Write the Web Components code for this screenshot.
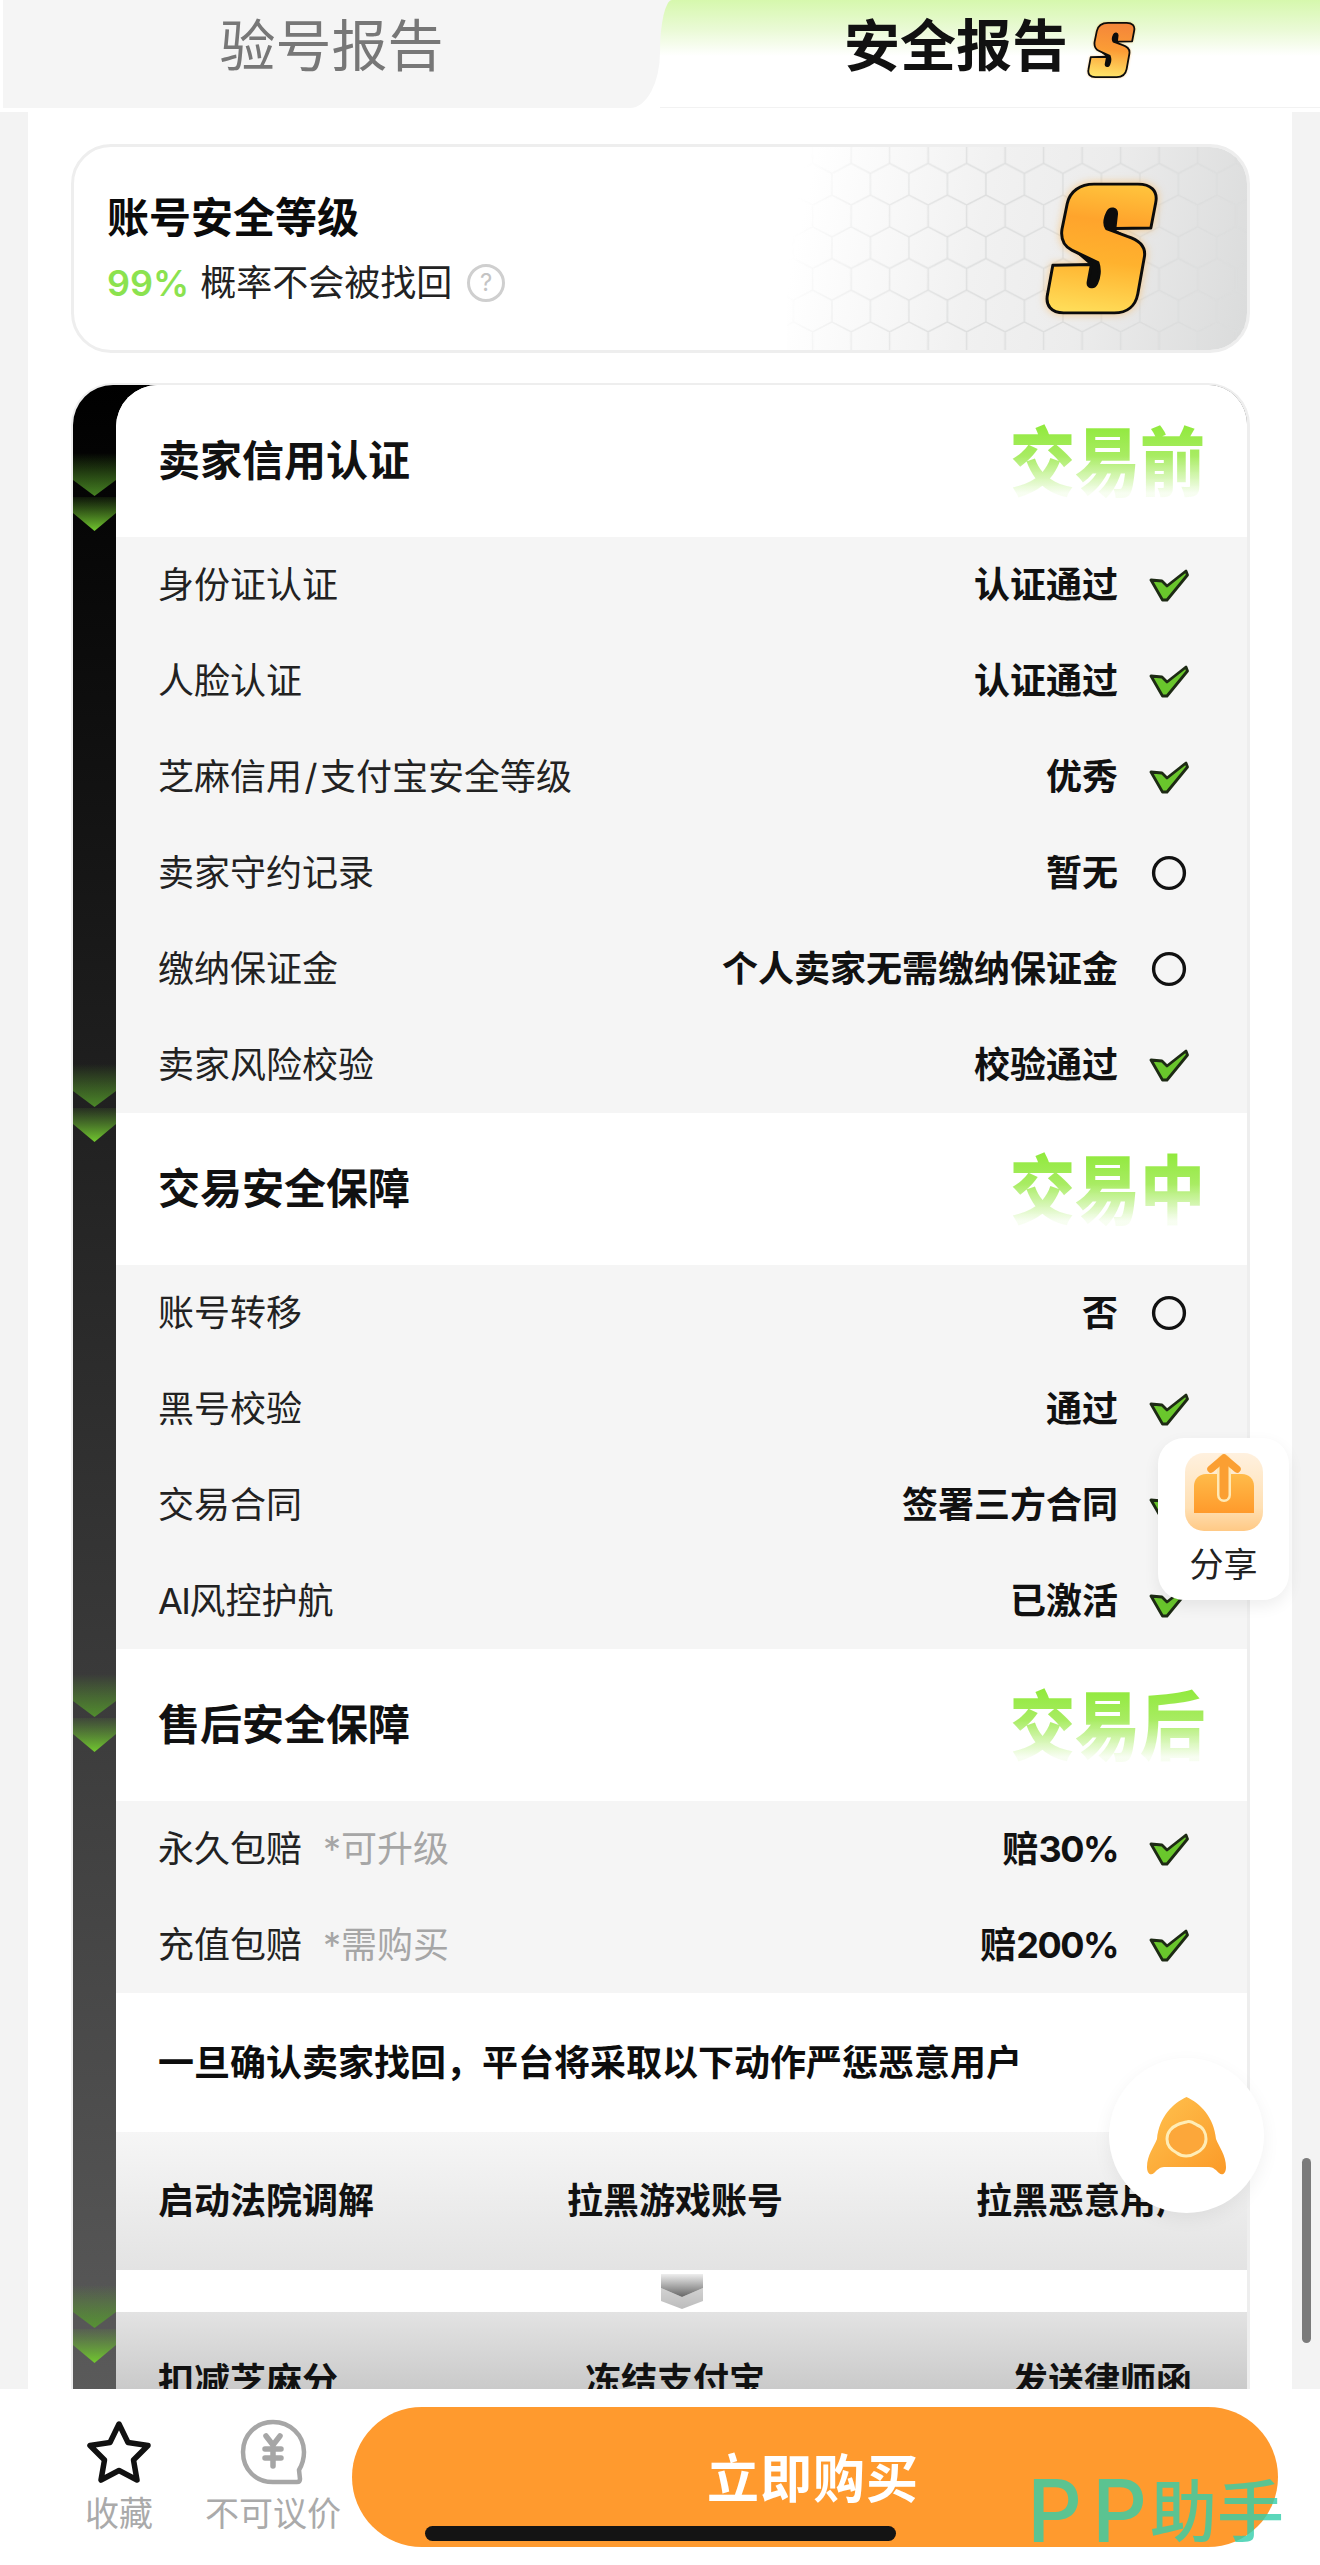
<!DOCTYPE html>
<html lang="zh-CN">
<head>
<meta charset="utf-8">
<title>安全报告</title>
<style>
html,body{margin:0;padding:0;background:#f3f3f3}
body{font-family:Inter,"Noto Sans CJK SC",sans-serif;color:#111}
</style>
</head>
<body>
<report-page>
  <report-tabs></report-tabs>
  <report-scroll>
    <level-card></level-card>
    <report-card>
      <report-head title="卖家信用认证" stage="交易前" first></report-head>
      <report-row label="身份证认证" value="认证通过" status="ok"></report-row>
      <report-row label="人脸认证" value="认证通过" status="ok"></report-row>
      <report-row label="芝麻信用/支付宝安全等级" value="优秀" status="ok"></report-row>
      <report-row label="卖家守约记录" value="暂无" status="none"></report-row>
      <report-row label="缴纳保证金" value="个人卖家无需缴纳保证金" status="none"></report-row>
      <report-row label="卖家风险校验" value="校验通过" status="ok"></report-row>
      <report-head title="交易安全保障" stage="交易中"></report-head>
      <report-row label="账号转移" value="否" status="none"></report-row>
      <report-row label="黑号校验" value="通过" status="ok"></report-row>
      <report-row label="交易合同" value="签署三方合同" status="ok"></report-row>
      <report-row label="AI风控护航" value="已激活" status="ok"></report-row>
      <report-head title="售后安全保障" stage="交易后"></report-head>
      <report-row label="永久包赔" note="*可升级" value="赔30%" status="ok"></report-row>
      <report-row label="充值包赔" note="*需购买" value="赔200%" status="ok"></report-row>
      <penalty-block></penalty-block>
    </report-card>
  </report-scroll>
  <bottom-bar></bottom-bar>
  <share-float></share-float>
  <rocket-float></rocket-float>
  <scroll-thumb></scroll-thumb>
</report-page>
<script>
function def(name, css, html){
  customElements.define(name, class extends HTMLElement{
    connectedCallback(){
      if(this.shadowRoot) return;
      const s=this.attachShadow({mode:'open'});
      const a=n=>this.getAttribute(n)||'';
      const small=this.hasAttribute('small');
      s.innerHTML='<style>'+css+'</style>'+(typeof html==='function'?html(a,small):html);
    }
  });
}
let gid=0;
const latin=t=>t.replace(/\//g,'<span style="padding:0 2.5px">/</span>').replace(/[A-Za-z0-9%]+(?![^<]*>)/g,m=>`<span style="letter-spacing:-1.5px">${m}</span>`);
const S_PATH='M338 184 L472 184 C512 184 534 204 527 240 L512 318 L402 320 L407 276 C408 258 388 254 380 270 C372 286 366 304 376 320 L440 344 C478 356 498 376 492 408 L472 520 C465 556 440 578 400 578 L245 578 C208 578 188 556 196 520 L212 432 L330 430 L320 484 C318 500 338 504 346 488 C354 472 358 446 350 424 L270 386 C246 374 236 350 240 322 L256 244 C264 206 296 184 338 184 Z';
const S_SLITS='M404 324 L409 272 C409 252 386 250 376 268 C364 292 362 312 374 324 L448 350 Z M322 428 L316 486 C314 506 340 510 350 492 C362 468 364 442 352 420 L280 392 Z';

def('s-logo',':host{display:block;line-height:0}svg{display:block;overflow:visible}',(a,small)=>{
  const id='sg'+(++gid);
  const w=a('w'),h=a('h');
  const stops=small
    ?'<stop offset="0" stop-color="#f4853a"/><stop offset=".5" stop-color="#fb9c35"/><stop offset="1" stop-color="#ffe468"/>'
    :'<stop offset="0" stop-color="#ffc23c"/><stop offset=".28" stop-color="#ffa42c"/><stop offset=".6" stop-color="#ffb22e"/><stop offset="1" stop-color="#ffdc58"/>';
  const sw=small?13:9;
  return `<svg width="${w}" height="${h}" viewBox="185 172 355 418" style="filter:drop-shadow(0 0 ${small?1:4}px rgba(255,170,50,.55))"><defs><linearGradient id="${id}" x1=".55" y1="0" x2=".45" y2="1">${stops}</linearGradient></defs><path d="${S_SLITS}" fill="#0c0c0c"/><path d="${S_PATH}" fill="url(#${id})" stroke="#0c0c0c" stroke-width="${sw}" stroke-linejoin="round"/></svg>`;
});

def('report-page',`:host{display:flex;flex-direction:column;width:1320px;height:2565px;overflow:hidden;position:relative;background:#f3f3f3}`,`<slot></slot>`);

def('report-tabs',`
:host{display:flex;flex:none;height:112px;align-items:flex-start;padding-left:3px;background:linear-gradient(#f5f5f5,#f5f5f5) 660px 0/14px 52px no-repeat,#fff}
.t{height:108px;display:flex;align-items:center;justify-content:center;box-sizing:border-box;padding-bottom:16px;font-size:56px;line-height:1}
.a{width:657px;background:#f5f5f5;color:#777;border-bottom-right-radius:30px 56px}
.b{flex:1;background:linear-gradient(#d6f8ad 0,#eafad6 30px,#fff 56px);border-top-left-radius:12px 52px;border-bottom:1px solid #f2f2f2;font-weight:700;color:#111;gap:19px}
s-logo{margin-top:8px}
`,`<div class="t a">验号报告</div><div class="t b"><span>安全报告</span><s-logo w="49" h="58" small></s-logo></div>`);

def('report-scroll',`:host{display:block;flex:1;min-height:0;overflow:hidden;margin:0 28px;background:#fff;padding:32px 42px 0 43px;box-sizing:border-box}`,`<slot></slot>`);

def('level-card',`
:host{display:flex;align-items:center;height:209px;box-sizing:border-box;border:3px solid #eee;border-radius:40px;background:#fff;position:relative;overflow:hidden;margin-bottom:30px;padding-left:33px}
.decor{position:absolute;right:0;top:0;bottom:0;width:460px;background:linear-gradient(102deg,rgba(255,255,255,0) 6%,#f1f1f1 42%,#ececec 65%,#dadbdb 100%)}
.decor svg{position:absolute;inset:0;width:100%;height:100%;-webkit-mask-image:linear-gradient(100deg,transparent 4%,#000 40%);mask-image:linear-gradient(100deg,transparent 4%,#000 40%)}
.txt{position:relative;flex:1;display:flex;flex-direction:column;padding-bottom:1px}
.ti{font-size:42px;font-weight:700;line-height:58px;color:#0b0b0b}
.sub{display:flex;align-items:center;font-size:36px;line-height:50px;margin-top:11px;color:#222}
.p{color:#8be24f;font-weight:600;margin-right:11px}
.q{width:32px;height:32px;margin-left:15px;border:3px solid #cfcfcf;border-radius:50%;display:flex;align-items:center;justify-content:center;font-size:24px;line-height:1;color:#c4c4c4}
s-logo{position:relative;margin-right:87px;margin-top:-1px}
`,`<div class="decor"><svg xmlns="http://www.w3.org/2000/svg"><defs><pattern id="hex" width="38.5" height="63.4" patternUnits="userSpaceOnUse" patternTransform="translate(6.4 -5.3)"><path d="M19.25 0V21.7L0 31.7M19.25 21.7L38.5 31.7M0 31.7V53.4L19.25 63.4M38.5 31.7V53.4L19.25 63.4" fill="none" stroke="#dcdddd" stroke-width="1.4"/></pattern></defs><rect width="100%" height="100%" fill="url(#hex)"/></svg></div>
<div class="txt"><div class="ti">账号安全等级</div><div class="sub"><span class="p">99%</span><span>概率不会被找回</span><span class="q">?</span></div></div>
<s-logo w="116" h="137"></s-logo>`);

const chev=()=>{const id='cg'+(++gid);return `<svg width="43" height="80" viewBox="0 0 43 80"><defs><linearGradient id="${id}a" x1="0" y1="0" x2="0" y2="1"><stop offset="0" stop-color="#5aa628" stop-opacity="0"/><stop offset="1" stop-color="#56a12a" stop-opacity=".8"/></linearGradient><linearGradient id="${id}b" x1="0" y1="0" x2="0" y2="1"><stop offset="0" stop-color="#62b02c" stop-opacity=".1"/><stop offset="1" stop-color="#72c82f"/></linearGradient></defs><polygon points="0,0 43,0 43,27 21.5,43 0,27" fill="url(#${id}a)"/><polygon points="0,44 21.5,44 43,44 43,60 21.5,78 0,60" fill="url(#${id}b)"/></svg>`};

def('report-card',`
:host{display:grid;grid-template-columns:43px 1fr;box-sizing:border-box;border:solid #eee;border-width:2px 3px 0 2px;border-radius:42px 42px 0 0;overflow:hidden;background:linear-gradient(#000 0,#5a5a5a 2006px);align-items:start}
.rail{display:flex;flex-direction:column;gap:530.5px;padding-top:68px}
.rail svg{display:block;flex:none}
.body{background:#fff;border-top-left-radius:42px;overflow:hidden;min-width:0}
`,()=>`<div class="rail">${chev()}${chev()}${chev()}${chev()}</div><div class="body"><slot></slot></div>`);

def('report-head',`
:host{display:flex;align-items:center;justify-content:space-between;height:152px;box-sizing:border-box;padding:0 42px;background:#fff}
.t{font-size:42px;font-weight:700;color:#111;line-height:1}
.s{font-family:"Noto Sans CJK SC",sans-serif;font-size:65px;font-weight:900;line-height:100px;height:100px;transform:translateY(-3px) scaleY(1.16);background:linear-gradient(#8fe93a 20%,#a8ec62 48%,rgba(225,250,200,.25) 80%);-webkit-background-clip:text;background-clip:text;-webkit-text-fill-color:transparent;color:transparent}
`,(a)=>`<div class="t">${a('title')}</div><div class="s">${a('stage')}</div>`);

def('status-icon',`:host{display:block;width:40px;height:40px;flex:none}svg{display:block}`,(a)=>
  a('status')==='ok'
  ?`<svg width="40" height="40" viewBox="0 0 40 40"><path d="M2 15 L13 16 L18 21 L37 6 L38.5 10 L18 35 L13.5 35 Z" fill="#69c62c" stroke="#1d2a14" stroke-width="2.8" stroke-linejoin="round"/></svg>`
  :`<svg width="40" height="40" viewBox="0 0 40 40"><circle cx="20" cy="20" r="15.4" fill="none" stroke="#111" stroke-width="3.4"/></svg>`);

def('report-row',`
:host{display:flex;align-items:center;height:96px;box-sizing:border-box;background:#f5f5f5;padding:0 58px 0 42px;font-size:36px}
.l,.n,.v{padding-bottom:6px}
.l{color:#222}
.n{color:#a6a6a6;margin-left:21px}
.v{margin-left:auto;font-weight:700;color:#111;margin-right:31px}
`,(a)=>`<span class="l">${latin(a('label'))}</span>${a('note')?`<span class="n">${latin(a('note'))}</span>`:''}<span class="v">${latin(a('value'))}</span><status-icon status="${a('status')}"></status-icon>`);

def('penalty-block',`
:host{display:block;background:#fff}
.h{display:flex;align-items:center;height:139px;box-sizing:border-box;padding:0 0 6px 42px;font-size:36px;font-weight:700;color:#0d0d0d}
.r{display:flex;align-items:center;justify-content:space-between;height:138px;box-sizing:border-box;padding:0 55px 6px 42px;font-size:36px;font-weight:700;color:#111}
.r1{background:linear-gradient(#f6f6f6,#e3e3e3)}
.r2{background:linear-gradient(#e3e3e3,#b6b6b6)}
.m{display:flex;align-items:center;justify-content:center;height:42px}
.m svg{display:block}
`,`<div class="h">一旦确认卖家找回，平台将采取以下动作严惩恶意用户</div>
<div class="r r1"><span>启动法院调解</span><span>拉黑游戏账号</span><span>拉黑恶意用户</span></div>
<div class="m"><svg width="42" height="35" viewBox="0 0 42 35"><defs><linearGradient id="m1" x1="0" y1="0" x2="0" y2="1"><stop offset="0" stop-color="#eeeeee"/><stop offset="1" stop-color="#666666"/></linearGradient><linearGradient id="m2" x1="0" y1="0" x2="0" y2="1"><stop offset="0" stop-color="#d2d2d2"/><stop offset="1" stop-color="#bcbcbc"/></linearGradient></defs><polygon points="0,14 21,23 42,14 42,27 21,35 0,27" fill="url(#m2)"/><polygon points="0,0 42,0 42,14 21,23 0,14" fill="url(#m1)"/></svg></div>
<div class="r r2"><span>扣减芝麻分</span><span>冻结支付宝</span><span>发送律师函</span></div>`);

def('bottom-bar',`
:host{display:flex;flex:none;height:176px;box-sizing:border-box;background:#fff;position:relative;padding-left:85px;align-items:flex-start}
.i{display:flex;flex-direction:column;align-items:center;padding-top:30px;font-size:34px;line-height:1;color:#aaa}
.i svg{display:block;height:66px}
.i span{margin-top:12px}
.i2{margin-left:52px}
.btn{margin:18px 0 0 11px;width:926px;height:140px;border-radius:70px;background:#ff9a2e;color:#fff;font-size:52px;font-weight:700;display:flex;align-items:center;justify-content:center;padding:0 4px 3px 0;box-sizing:border-box;letter-spacing:1px}
.home{position:absolute;left:425px;top:137px;width:471px;height:15px;border-radius:8px;background:#141414}
.wm{position:absolute;left:1027px;top:90px;display:flex;align-items:center;height:64px;color:rgba(50,205,170,.8);font-size:67px;line-height:1;font-weight:500;white-space:nowrap}
.wm b{font-weight:500;font-family:Inter,sans-serif;font-size:86px;width:65px}
.wm span{margin-left:-7px}
`,`<div class="i"><svg width="66" height="64" viewBox="0 0 66 64"><path d="M33 4 L42 22.5 L62 25.5 L47.5 40 L51 60 L33 50.5 L15 60 L18.5 40 L4 25.5 L24 22.5 Z" fill="none" stroke="#111" stroke-width="5.5" stroke-linejoin="round"/></svg><span>收藏</span></div>
<div class="i i2"><svg width="68" height="66" viewBox="0 0 68 66"><path d="M34 3 C17 3 4 16 4 33 C4 51 17 63 34 63 L58 63 C60 63 61 62 61 60 L60 51 C63 46 65 40 65 33 C65 16 51 3 34 3 Z" fill="none" stroke="#a6a6a6" stroke-width="4.5" stroke-linejoin="round"/><path d="M27 17 L34 26 L41 17 M34 26 V47 M26 30 H42 M26 39 H42" fill="none" stroke="#a6a6a6" stroke-width="5.5" stroke-linecap="round" stroke-linejoin="round"/></svg><span>不可议价</span></div>
<div class="btn">立即购买</div>
<div class="home"></div>
<div class="wm"><b>P</b><b>P</b><span>助手</span></div>`);

def('share-float',`
:host{position:absolute;left:1158px;top:1438px;width:131px;height:162px;box-sizing:border-box;border-radius:26px;background:#fff;box-shadow:0 6px 16px rgba(0,0,0,.07);display:flex;flex-direction:column;align-items:center;padding-top:15px;font-size:34px;line-height:1;color:#222}
svg{display:block;flex:none}
span{margin-top:17px}
`,`<svg width="78" height="78" viewBox="0 0 78 78"><defs><linearGradient id="sb" x1="0" y1="0" x2="0" y2="1"><stop offset="0" stop-color="#fff1df"/><stop offset=".7" stop-color="#ffe0b4"/><stop offset="1" stop-color="#ffc985"/></linearGradient><linearGradient id="st" x1="0" y1="0" x2="0" y2="1"><stop offset="0" stop-color="#ffbb4a"/><stop offset="1" stop-color="#ff9a2b"/></linearGradient></defs><rect width="78" height="78" rx="19" fill="url(#sb)"/><path d="M9 33 C9 26 14 21 21 21 H57 C64 21 69 26 69 33 V60 H9 Z" fill="url(#st)"/><path d="M39 42 V8" stroke="#ffe9b6" stroke-width="14" stroke-linecap="round"/><path d="M26 16 L39 5 L52 16" fill="none" stroke="#fb9f32" stroke-width="7.5" stroke-linecap="round" stroke-linejoin="round"/><path d="M39 42 V8" stroke="#fb9f32" stroke-width="9" stroke-linecap="round"/></svg><span>分享</span>`);

def('rocket-float',`
:host{position:absolute;left:1109px;top:2058px;width:155px;height:155px;border-radius:50%;background:#fff;box-shadow:0 6px 18px rgba(0,0,0,.06);display:flex;align-items:center;justify-content:center}
svg{display:block;margin-top:1px}
`,`<svg width="79" height="78" viewBox="0 0 79 78"><defs><linearGradient id="rk" x1="0" y1="0" x2="1" y2="1"><stop offset="0" stop-color="#ffc24f"/><stop offset="1" stop-color="#fb9a28"/></linearGradient></defs><path d="M39.5 0 C53 6 67 20 69 42 C72 50 79 58 79 70 C79 77 75 79 72 76 C69 73 66 70 62 70 L17 70 C13 70 10 73 7 76 C4 79 0 77 0 70 C0 58 7 50 10 42 C12 20 26 6 39.5 0 Z" fill="url(#rk)"/><path d="M39.5 25 C43 23 47 26 50 28 C56 30 59 36 59 42 C59 49 54 54 49 56 C43 60 35 60 30 56 C24 53 20 48 20 42 C20 35 25 30 30 28 C33 26 36 26 39.5 25 Z" fill="#fca73a" stroke="#ffedb6" stroke-width="3"/></svg>`);

def('scroll-thumb',`:host{position:absolute;left:1302px;top:2158px;width:9px;height:185px;border-radius:5px;background:#7b7b7b}`,``);
</script>
</body>
</html>
